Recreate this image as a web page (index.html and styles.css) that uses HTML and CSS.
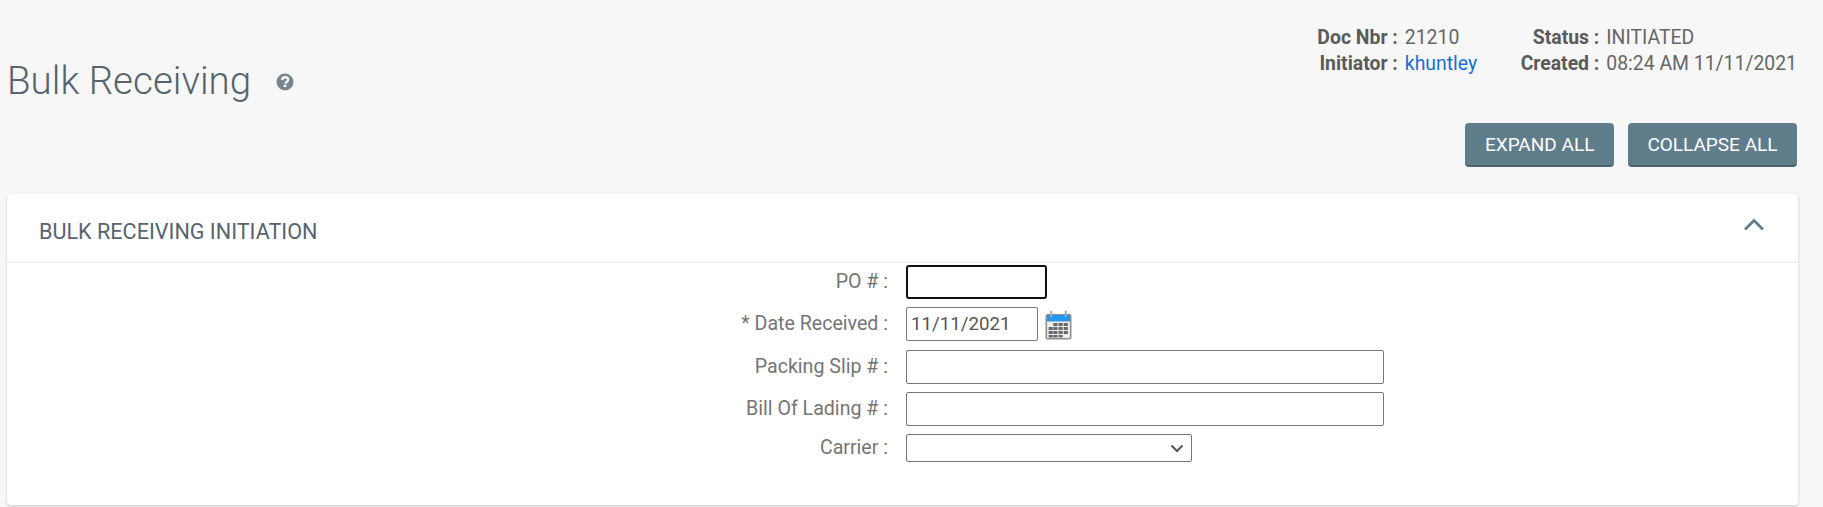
FILE: index.html
```html
<!DOCTYPE html>
<html lang="en">
<head>
    <meta charset="UTF-8">
    <meta name="viewport" content="width=device-width, initial-scale=1.0">
    <title>Bulk Receiving</title>
    <link rel="stylesheet" href="styles.css">
</head>
<body>
    <div class="page-header">
        <div class="title-wrap">
            <h1>Bulk Receiving</h1>
            <svg class="help-icon" width="18" height="18" viewBox="0 0 18 18">
                <circle cx="9" cy="9" r="8.500" fill="#78868f"/>
                <path d="M6.100 7.100C6.200 5.300 7.400 4.300 9.100 4.300c1.700 0 3 1.100 3 2.500 0 1.200-.7 1.800-1.500 2.300-.7.400-1 .8-1 1.600" fill="none" stroke="#f7f7f7" stroke-width="2.400"/>
                <rect x="7.700" y="11.700" width="2.600" height="2.400" fill="#f7f7f7"/>
            </svg>
        </div>
        <div class="header-right">
            <div class="doc-info">
                <span class="info-label">Doc Nbr :</span><span class="info-value">21210</span>
                <span class="info-label">Status :</span><span class="info-value">INITIATED</span>
                <span class="info-label">Initiator :</span><span class="info-value"><a href="#">khuntley</a></span>
                <span class="info-label">Created :</span><span class="info-value">08:24 AM 11/11/2021</span>
            </div>
            <div class="button-container">
                <button>EXPAND ALL</button>
                <button>COLLAPSE ALL</button>
            </div>
        </div>
    </div>

    <div class="card">
        <div class="card-header">
            <h2>BULK RECEIVING INITIATION</h2>
            <svg class="chevron" width="20" height="14" viewBox="0 0 20 14">
                <path d="M1 12.500L10 3.500L19 12.500" fill="none" stroke="#607d8b" stroke-width="2.800"/>
            </svg>
        </div>
        <form class="form-grid">
            <label>PO # :</label>
            <div class="field"><input type="text" class="po-input"></div>

            <label>* Date Received :</label>
            <div class="field">
                <input type="text" class="date-input" value="11/11/2021">
                <svg class="calendar-icon" width="27" height="30" viewBox="0 0 26 30" preserveAspectRatio="none">
                    <rect x="0.500" y="4" width="25" height="25.500" rx="2" fill="#909090"/>
                    <rect x="2" y="5" width="22" height="6.500" fill="#2196f3"/>
                    <rect x="2" y="11.500" width="22" height="16.500" fill="#ececec"/>
                    <rect x="5" y="0.500" width="2" height="7" rx="1" fill="#a3aeb4"/>
                    <rect x="19" y="0.500" width="2" height="7" rx="1" fill="#a3aeb4"/>
                    <path d="M8 13h4v3H8zM13 13h4v3h-4zM18 13h4v3h-4zM3.500 17h4v3h-4zM8 17h4v3H8zM13 17h4v3h-4zM18 17h4v3h-4zM3.500 21h4v3h-4zM8 21h4v3H8zM13 21h4v3h-4zM18 21h4v3h-4zM3.500 25h4v2.500h-4zM8 25h4v2.500H8zM13 25h4v2.500h-4z" fill="#666a6d"/>
                </svg>
            </div>

            <label>Packing Slip # :</label>
            <div class="field"><input type="text" class="wide-input"></div>

            <label>Bill Of Lading # :</label>
            <div class="field"><input type="text" class="wide-input"></div>

            <label class="carrier-label">Carrier :</label>
            <div class="field carrier-field">
                <div class="select-box">
                    <svg width="14" height="9" viewBox="0 0 14 9">
                        <path d="M1.500 1.500L7 7L12.500 1.500" fill="none" stroke="#555555" stroke-width="2"/>
                    </svg>
                </div>
            </div>
        </form>
    </div>
</body>
</html>
```

FILE: styles.css
```css
html, body {
    height: 507px;
    overflow: hidden;
}

body {
    font-family: Roboto, "Liberation Sans", sans-serif;
    margin: 0;
    padding: 0 25px 0 7px;
    background-color: #f7f7f7;
    color: #666666;
    font-size: 19.4px;
}

.page-header {
    display: flex;
    justify-content: space-between;
    height: 194px;
}

.title-wrap {
    display: flex;
    align-items: center;
    height: 160px;
}

.title-wrap h1 {
    margin: 0;
    font-size: 38.5px;
    font-weight: 300;
    color: #56646e;
}

.help-icon {
    margin: 3px 0 0 25px;
}

.header-right {
    display: flex;
    flex-direction: column;
    align-items: flex-end;
    padding: 25px 1px 0 0;
}

.doc-info {
    display: grid;
    grid-template-columns: auto auto auto auto;
    column-gap: 7px;
    line-height: 26px;
}

.info-label {
    font-weight: 700;
    text-align: right;
    color: #5a5a5a;
}

.info-value {
    margin-right: 36.500px;
}

.info-value:nth-child(4n) {
    margin-right: 0;
}

.info-value a {
    color: #1a6fd4;
    text-decoration: none;
}

.button-container {
    display: flex;
    gap: 14px;
    margin-top: 46px;
}

button {
    height: 44px;
    padding: 0 19.500px;
    font-family: Roboto, "Liberation Sans", sans-serif;
    font-size: 19px;
    color: #ffffff;
    background-color: #607d8b;
    border: none;
    border-bottom: 2px solid #4c626e;
    border-radius: 4px;
}

.card {
    height: 311px;
    background-color: #ffffff;
    border-radius: 4px;
    box-shadow: 0 1px 3px rgba(0, 0, 0, 0.2);
}

.card-header {
    display: flex;
    justify-content: space-between;
    align-items: center;
    height: 67px;
    padding: 0 34px 0 32px;
    border-bottom: 2px solid #f2f2f2;
}

.card-header h2 {
    margin: 8px 0 0 0;
    font-size: 21.6px;
    font-weight: 400;
    color: #56646e;
}

.chevron {
    margin-top: -8px;
}

.form-grid {
    display: grid;
    grid-template-columns: 881px 1fr;
    column-gap: 18px;
    grid-auto-rows: 34px;
    row-gap: 8.250px;
    padding-top: 2px;
}

label {
    align-self: center;
    padding-bottom: 1px;
    text-align: right;
    font-size: 19.600px;
    color: #757575;
}

.field {
    display: flex;
    align-items: flex-start;
}

input {
    box-sizing: border-box;
    height: 34px;
    padding: 1px 4px;
    font-family: Roboto, "Liberation Sans", sans-serif;
    font-size: 18.700px;
    color: #555555;
    background: #ffffff;
    border: 1px solid #767676;
    border-radius: 2px;
    outline: none;
}

.po-input {
    width: 141px;
    border: 2px solid #111111;
    border-radius: 3px;
}

.date-input {
    width: 132px;
}

.wide-input {
    width: 478px;
}

.calendar-icon {
    margin: 3px 0 0 7px;
}

.carrier-label {
    align-self: start;
    margin-top: 2px;
}

.select-box {
    box-sizing: border-box;
    display: flex;
    align-items: center;
    justify-content: flex-end;
    width: 286px;
    height: 28px;
    padding-right: 7px;
    border: 1px solid #767676;
    border-radius: 2px;
}
```
